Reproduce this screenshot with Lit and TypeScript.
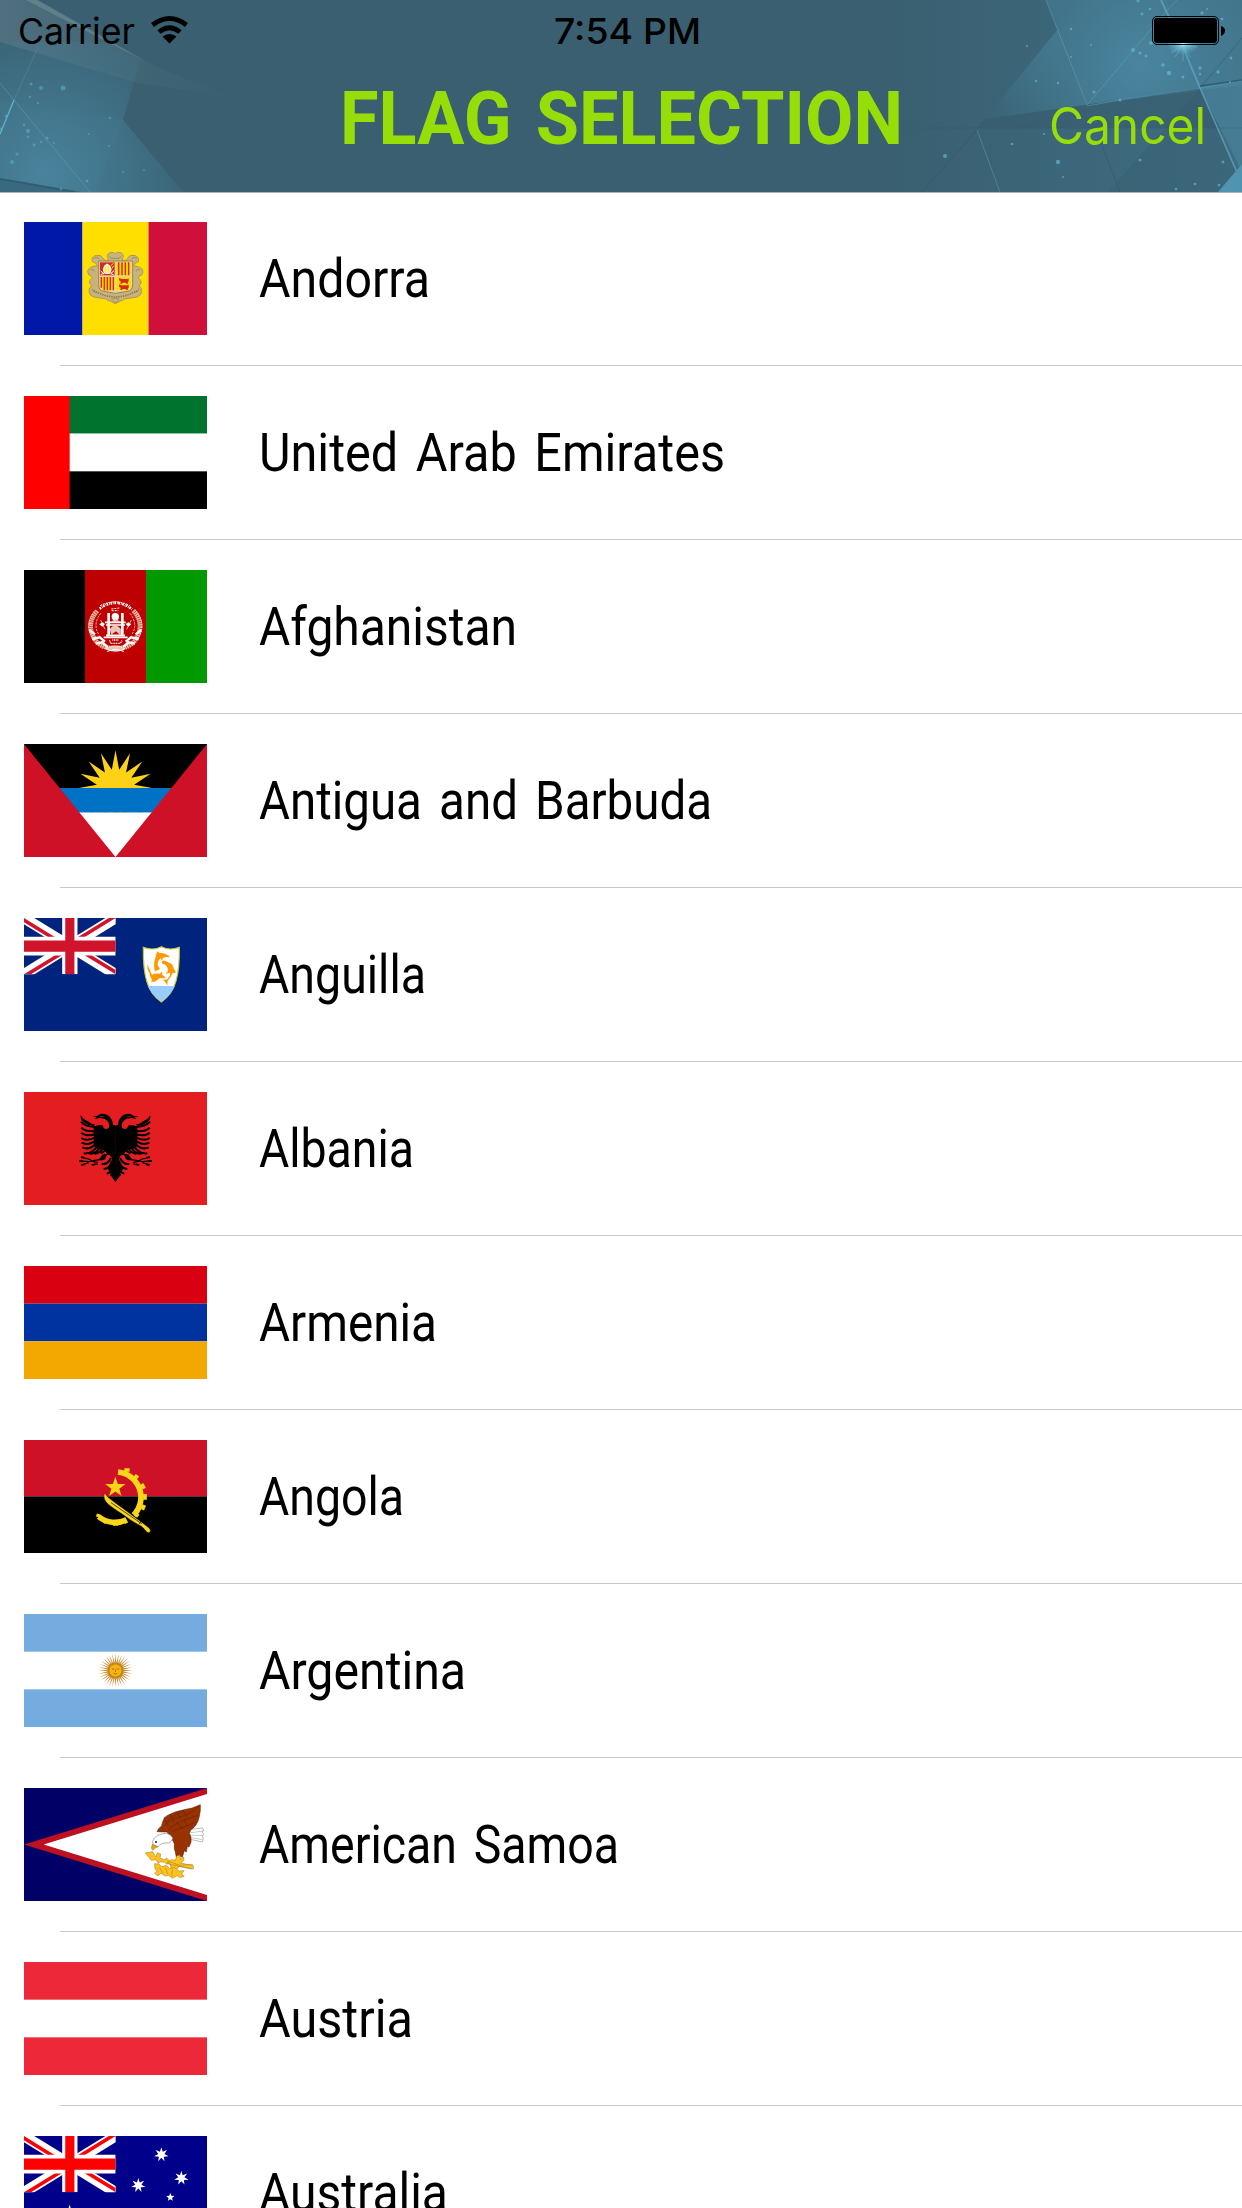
import { LitElement, html, svg, css } from 'lit'
import { customElement, property } from 'lit/decorators.js'

interface Country {
  code: string
  name: string
  width: number
}

const COUNTRIES: Country[] = [
  { code: 'ad', name: 'Andorra', width: 171 },
  { code: 'ae', name: 'United Arab Emirates', width: 466 },
  { code: 'af', name: 'Afghanistan', width: 258 },
  { code: 'ag', name: 'Antigua and Barbuda', width: 453 },
  { code: 'ai', name: 'Anguilla', width: 167 },
  { code: 'al', name: 'Albania', width: 155 },
  { code: 'am', name: 'Armenia', width: 178 },
  { code: 'ao', name: 'Angola', width: 145 },
  { code: 'ar', name: 'Argentina', width: 207 },
  { code: 'as', name: 'American Samoa', width: 360 },
  { code: 'at', name: 'Austria', width: 154 },
  { code: 'au', name: 'Australia', width: 189 },
]

const star = (cx: number, cy: number, outer: number, inner: number, n: number) =>
  Array.from({ length: n * 2 }, (_, i) => {
    const r = i % 2 ? inner : outer
    const a = (Math.PI * i) / n - Math.PI / 2
    return `${(cx + r * Math.cos(a)).toFixed(1)},${(cy + r * Math.sin(a)).toFixed(1)}`
  }).join(' ')

const rect = (x: number, y: number, w: number, h: number, fill: string) =>
  svg`<rect x=${x} y=${y} width=${w} height=${h} fill=${fill} />`

const unionJack = (blue: string, red: string) => svg`
  <svg width="275" height="169" viewBox="0 0 60 30" preserveAspectRatio="none">
    <clipPath id="quarters"><path d="M30 15h30v15zv15H0zH0V0zV0h30z" /></clipPath>
    <rect width="60" height="30" fill=${blue} />
    <path d="M0 0l60 30M60 0L0 30" stroke="#fff" stroke-width="6" />
    <path d="M0 0l60 30M60 0L0 30" stroke=${red} stroke-width="4" clip-path="url(#quarters)" />
    <path d="M30 0v30M0 15h60" stroke="#fff" stroke-width="10" />
    <path d="M30 0v30M0 15h60" stroke=${red} stroke-width="6" />
  </svg>`

const andorra = () => svg`
  ${rect(0, 0, 175.5, 339, '#0018a8')}
  ${rect(175.5, 0, 198, 339, '#fedf00')}
  ${rect(373.5, 0, 176, 339, '#d0103a')}
  <g transform="translate(-72 -66)">
    <path fill="#c7b37f" stroke="#a68f59" stroke-width="2.5" d="M346 161q6-5 10-4q14 1 14 12l-4 12q16 2 18-8q4-9 18-7q14 3 14 14q0 7-7 8q-5 1-6 5l-3 4q8 1 13 3q15 3 16 15q0 11-12 14q-5 5 2 9q6 2 4 11q-2 6-6 8q9 7 8 18q-1 11-14 16l-38 6q-5 7-12 6l-15 8l-15-8q-7 1-12-6l-38-6q-13-5-14-16q-1-11 8-18q-4-2-6-8q-2-9 4-11q7-4 2-9q-12-3-12-14q1-12 16-15q5-2 13-3l-3-4q-1-4-6-5q-7-1-7-8q0-11 14-14q14-2 18 7q2 10 18 8l-4-12q0-11 14-12q4-1 10 4z" />
    <g fill="none" stroke="#8f7a49" stroke-width="2">
      <path d="M281 176q7-8 16 0M395 176q9-7 16 0M272 210q8-6 11 4M421 210q-10-6-12 4M329 169l5 6h24l5-6M277 266q0 9 11 12M417 266q0 9-12 12" />
      <path d="M281 272q32 18 65 19q34-1 65-19" stroke-width="5" stroke-dasharray="4 3" />
      <path d="M334 298q12-8 24 0M338 302l8 6l9-6" />
    </g>
    <path fill="#e3d59d" stroke="#9d864c" stroke-width="3" d="M296 183h102v72q-1 18-17 19l-35 6l-34-6q-15-1-16-19z" />
    ${rect(300, 187, 44, 39, '#d52b1e')}
    ${rect(349, 187, 44, 39, '#fedf00')}
    <path fill="#fedf00" d="M300 231h44v40h-33q-10-2-11-15z" />
    <path fill="#fedf00" d="M349 231h44v25q-1 13-11 15h-33z" />
    <path d="M356 187v39M366 187v39M376 187v39M386 187v39M304 231v32M313 231v40M322 231v40M331 231v40M340 231v40" stroke="#d52b1e" stroke-width="4.5" />
    <path d="M314 220q-8-10 0-23l7-5l8 5q9 12 0 23z" fill="#fff3a0" stroke="#fff" stroke-width="3" />
    <path d="M317 219v-17M325 219v-17" stroke="#fedf00" stroke-width="3" />
    <path d="M302 213l10 8l-10 2M342 212l-10 9l9 3" fill="none" stroke="#fff" stroke-width="3" />
    <path d="M332 197l9-7M336 205l5-8" stroke="#fedf00" stroke-width="3" />
    <path fill="#d52b1e" d="M357 234l8 3h17l4-2v9l-3 3l1 4h-5l-2-3h-9l-2 3h-5l1-7l-5-3zM357 253l8 3h17l4-2v9l-3 3l1 4h-5l-2-3h-9l-2 3h-5l1-7l-5-3z" />
  </g>`

const emirates = () => svg`
  ${rect(0, 0, 549, 113, '#00732f')}
  ${rect(0, 113, 549, 113, '#fff')}
  ${rect(0, 226, 549, 113, '#000')}
  ${rect(0, 0, 137, 339, '#f00')}`

const afghanistan = () => svg`
  ${rect(0, 0, 183, 339, '#000')}
  ${rect(183, 0, 183, 339, '#bf0000')}
  ${rect(366, 0, 183, 339, '#009a00')}
  <g transform="translate(-42 -30)" fill="none" stroke="#fff">
    <path d="M262 153q-36 38-7 86q20 28 59 25M370 152q36 39 7 87q-20 28-59 25" stroke="#e6b9a0" stroke-width="14" stroke-dasharray="5 1.5" />
    <path d="M254 152q-33 40-5 86M378 152q33 40 5 86M272 160q-26 34-4 66M360 160q26 34 4 66" stroke-width="2" stroke-dasharray="7 3" />
    <path d="M238 210l17 13M246 237l23-5l16 13M257 251l19-4l17 14M394 210l-17 13M386 237l-23-5l-16 13M375 251l-19-4l-17 14" stroke-width="7" />
    <path d="M269 146q48-36 97 2" stroke-width="8" stroke-dasharray="5 3 2 2" />
    <path d="M270 137q46-23 90 0M304 147l24-3M305 152h20" stroke-width="3" stroke-dasharray="6 3" />
    <circle cx="316" cy="170" r="11" fill="#fff" stroke="none" />
    <path d="M296 159v65M337 159v65" stroke-width="8" />
    <path d="M285 187h62M288 195h57M281 232h72M288 226h57" stroke-width="5" />
    <path d="M305 185l11-9l13 9zM300 207q15-20 32 0v19l-14-13l-14 10z" fill="#e8c7b4" />
    <path d="M272 180l13 28M364 180l-14 28" stroke-width="2" />
    <path d="M268 193l9-6l8 5l-8 8zM347 192l8-5l9 6l-9 7z" fill="#fff" stroke="none" />
    <path d="M298 241l5 9h28l6-10M307 240h20" stroke-width="4" stroke-dasharray="3 2" />
    <path d="M287 266q30-16 58 0q-27 15-58 0z" fill="#e8c7b4" stroke-width="3" stroke-dasharray="7 2" />
    <path d="M291 274l25-6l26 6" stroke-width="3" />
  </g>`

const antigua = () => svg`
  ${rect(0, 0, 549, 133, '#000')}
  <polygon points=${star(274.5, 133, 114, 57, 16)} fill="#fcd116" />
  ${rect(0, 132, 549, 74, '#0072c6')}
  ${rect(0, 206, 549, 133, '#fff')}
  <path d="M0 0v339h549V0L274.500 339z" fill="#ce1126" />`

const anguilla = () => svg`
  ${rect(0, 0, 549, 339, '#00247d')}
  ${unionJack('#00247d', '#cf142b')}
  <g transform="translate(-42 -24)">
    <path d="M400 112q30 11 54-2q25 13 54 2q1 65-10 101q-10 38-44 63q-34-25-44-63q-11-36-10-101z" fill="#fff" stroke="#c2c83e" stroke-width="3.500" />
    <path d="M414 228h80q-11 28-40 46q-29-18-40-46z" fill="#9cf" />
    <g fill="#ff9900">
      <path d="M434 184q-4-25 2-40l3-13l4-7l5 5q18-2 33 13q-15-2-22 2l-4 8l-2-7q-10 5-10 20l7 13z" />
      <path d="M457 152q9-1 17 5q14 2 17 18l7 13l-10 1q-5 14-15 23l-1 14l-8-12l-6-4l14-2q9-8 9-20l-14 3l7-8q0-12-8-19l-11-4z" />
      <path d="M412 163l6 13q5 13 8 18q8-5 22-3l8-6l1 10q8 4 10 10l-17-1l-15 11h-12l3-6q-8-10-7-19l-6-11z" />
    </g>
  </g>`

const eagleHalf = () => svg`
  <path d="M317 122l-8-3q-2-18-13-27q-10-7-25-5l-8 5l-16 3l14 2l-8 5l17-3q15 1 22 8q9 11 4 22q-9 6-15-1l-4-7q-14-3-26 5v58q12 10 33 11l8 14q14 2 14 15l-14 25l25 38z" />
  <path d="M308 210h9v82l-15-21l8-12z" />
  <path d="M250 124l5-6q-14-2-18-8q-14-3-25-19q-2 13 9 21q12 9 29 12z" />
  <g fill="none" stroke="#000" stroke-width="6">
    <path d="M258 126q-32 0-45-16M258 138q-31 4-44-10M258 147q-30 9-44-4M258 156q-27 15-44 3M260 164q-25 20-45 9M263 170q-22 28-46 17M266 177q-18 32-45 28M272 181q-10 25-33 26M280 184q-5 19-26 23M288 188q-3 13-17 16" />
    <path d="M303 219q-11 22-28 17M306 229q-6 23-25 23M310 239q-4 24-20 27M314 247l-12 25" />
  </g>
  <path d="M292 207l-14 1q-6 12-16 18h17l6-3z" />
  <path d="M268 224l-34 6M263 232q-17-2-27-10l-23-5M264 237l-19 2M234 230l-27-3M236 233l-23 7" fill="none" stroke="#000" stroke-width="3.500" />
  <path d="M212 213l12 3l-3 5zM214 243l10-10l2 7zM206 230l12-5l-1 7zM244 243l10-8l2 6z" />
  <path d="M270 95h11" stroke="#e41e20" stroke-width="2" />`

const albania = () => svg`
  ${rect(0, 0, 549, 339, '#e41e20')}
  <g transform="translate(-42 -21)">${eagleHalf()}</g>
  <g transform="translate(591 -21) scale(-1 1)">${eagleHalf()}</g>`

const armenia = () => svg`
  ${rect(0, 0, 549, 113, '#d90012')}
  ${rect(0, 113, 549, 113, '#0033a0')}
  ${rect(0, 226, 549, 113, '#f2a800')}`

const angola = () => svg`
  ${rect(0, 0, 549, 169, '#ce1126')}
  ${rect(0, 169, 549, 170, '#000')}
  <g transform="translate(-42 -540)" fill="none" stroke="#f9d616">
    <path d="M324 636A76 76 0 0 1 371 765M350 779A78 78 0 0 1 266 770" stroke-width="17" />
    <path d="M343 630h16M374 646l10 8M395 672l8 14M405 702v17M403 735l-6 14M384 761l-7 9M266 762l-3 9M281 783l8 4M309 792h16M343 787l8-4" stroke-width="11" />
    <polygon points=${star(316, 682, 32, 12.5, 5)} fill="#f9d616" stroke="none" />
    <path d="M284 699l9 12q25 20 44 33l57 42q13 10 22 17q8 7 4 14q-7 4-14-6q-10-14-21-17q-25-14-45-30q-32-20-46-32q-17-16-10-33z" fill="#f9d616" stroke="#000" stroke-width="1" />
    <path d="M303 728l92 63M386 794l9-12" stroke="#000" stroke-width="2" />
  </g>`

const argentina = () => svg`
  ${rect(0, 0, 549, 339, '#74acdf')}
  ${rect(0, 113, 549, 113, '#fff')}
  <polygon points=${star(274.5, 169.5, 52, 22, 32)} fill="#cd8f3c" />
  <circle cx="274.5" cy="169.500" r="24" fill="#c4851f" />
  <circle cx="274.5" cy="169.500" r="18" fill="#f6b40e" />
  <path d="M264 165h7M278 165h7M274.500 167v7M269 178q5 4 11 0" stroke="#a8650c" stroke-width="2.500" fill="none" />`

const samoa = () => svg`
  ${rect(0, 0, 549, 339, '#006')}
  <path d="M0 169.500L549 0v339z" fill="#bd1021" />
  <path d="M59 169.500L549 18v303z" fill="#fff" />
  <g transform="translate(-42 -24)" stroke-width="1.500">
    <path d="M532 149l46-5l3 8l-5 3l5 8l-5 5l4 8l-3 10l-45-10z" fill="#fff" stroke="#777" />
    <path d="M538 159l41-6M537 166h42M538 172l41 7" stroke="#999" />
    <path d="M441 155q4-10 14-18q4-24 16-30q24-14 51-18l24-5q11-5 25-10q2 17-4 40q-6 24-24 35l-5 11q7 10 5 27l-6 14l-5-2l-3 17l-6-4l-6 20l-8-4l-10 4l-3-15q-5-12-3-26l-13-25l-10-10q-15 0-25-1z" fill="#983200" stroke="#4a1a05" />
    <path d="M463 137q21-22 53-28q30-9 51-30M466 127q22-20 56-35M475 150q20-25 91-44M487 154q36-14 70-27M462 110l12 27M480 102l12 25M500 96l12 22M520 91l11 20M500 125l17 22M521 117l13 24" fill="none" stroke="#5e1f05" />
    <path d="M455 162l14-2l12 5l8 9q-4 11-13 15q-15-2-25 4l-8 8l-14-7q-5-9 4-20q10-10 22-12z" fill="#fff" stroke="#666" />
    <circle cx="438" cy="186" r="3" fill="#222" />
    <path d="M427 193l17 7l-9 4l-6 7l-5-6z" fill="#e5a70f" stroke="#a37512" />
    <g fill="#ffc221" stroke="#977312">
      <path d="M406 219l22-4l10 16l4-13l10 4l-2 12l16 6l3-7l13 13l-11 7l-7-6l-13-2l-6 5l-7-11l-14 2z" />
      <path d="M484 239l12 2l4-13l9-3l3 13l9-7l1 9l-10 9l38 8v10l-41-8l-12 12l-14-7l-3-13l-9-2z" />
      <path d="M434 251l13 1l7 8l15-4l10 10l14-4l14 11l15-1l-7 9l7 9l-13 2l-8-5l-14 8l-11-9l-12 2l-11-9l-9 9l-10-8l8-8l-7-4z" />
      <path d="M472 243l37 13l40-3M475 252l70 15M449 263l9 17M466 263l8 20M487 269l-2 20" fill="none" />
    </g>
  </g>`

const austria = () => svg`
  ${rect(0, 0, 549, 339, '#ed2939')}
  ${rect(0, 113, 549, 113, '#fff')}`

const australia = () => svg`
  ${rect(0, 0, 549, 339, '#00008b')}
  ${unionJack('#00008b', '#f00')}
  <g fill="#fff">
    <polygon points=${star(137, 254, 48, 21, 7)} />
    <polygon points=${star(412, 56, 22, 9.5, 7)} />
    <polygon points=${star(472, 126, 22, 9.5, 7)} />
    <polygon points=${star(343, 148, 22, 9.5, 7)} />
    <polygon points=${star(439, 184, 13, 5.5, 5)} />
    <polygon points=${star(412, 282, 22, 9.5, 7)} />
  </g>`

const FLAGS: Record<string, () => unknown> = {
  ad: andorra,
  ae: emirates,
  af: afghanistan,
  ag: antigua,
  ai: anguilla,
  al: albania,
  am: armenia,
  ao: angola,
  ar: argentina,
  as: samoa,
  at: austria,
  au: australia,
}

@customElement('country-flag')
export class CountryFlag extends LitElement {
  @property() code = ''

  static styles = css`
    :host { display: block; width: 183px; height: 113px; }
    svg { display: block; }
    .flag { width: 100%; height: 100%; overflow: hidden; }
  `

  render() {
    return html`
      <svg class="flag" viewBox="0 0 549 339" preserveAspectRatio="none">
        ${FLAGS[this.code]?.()}
      </svg>
    `
  }
}

// single line of text stretched to a fixed width, baseline at the bottom of its box
@customElement('fit-text')
export class FitText extends LitElement {
  @property() text = ''
  @property({ type: Number }) width = 100
  @property({ type: Number }) height = 38

  static styles = css`
    :host { display: block; }
    svg { display: block; overflow: visible; fill: currentColor; }
  `

  render() {
    return html`
      <svg width=${this.width} height=${this.height}>
        <text x="0" y=${this.height} textLength=${this.width} lengthAdjust="spacingAndGlyphs">${this.text}</text>
      </svg>
    `
  }
}

const SPARKS_LEFT = [
  [41, 88, 2], [31, 84, 1.5], [63, 88, 2.5], [38, 103, 1.2], [30, 97, 1.2], [24, 125, 1.3], [28, 131, 2.2],
  [28, 137, 1.4], [47, 138, 1.6], [41, 142, 1.2], [34, 145, 1.4], [17, 154, 1.6], [12, 162, 2], [87, 181, 1.6],
  [61, 189, 1.4], [110, 118, 1.2], [89, 134, 1.1], [123, 172, 1], [144, 170, 1], [6, 116, 1.5], [1, 129, 1.6],
  [54, 143, 1], [109, 146, 1],
]

const SPARKS_RIGHT = [
  [1071, 29, 1.3], [1091, 45, 1], [1071, 57, 1], [1027, 46, 1], [1094, 92, 1.6], [1058, 83, 1.2], [1036, 81, 1.2],
  [1120, 100, 1.5], [1133, 50, 2], [1140, 53, 1.6], [1146, 56, 1.4], [1151, 43, 2], [1163, 65, 1.8],
  [1169, 73, 2.2], [1183, 77, 1.5], [1200, 68, 1.7], [1200, 74, 1.2], [1218, 72, 1.7], [1231, 58, 1.4],
  [1222, 19, 1.5], [1202, 13, 1.7], [1142, 14, 1.4], [1150, 9, 1.2], [1138, 1, 1.5], [1207, 9, 1], [1230, 82, 1],
  [945, 156, 2], [1012, 144, 1.3], [1058, 162, 2.2], [1063, 177, 1], [1140, 160, 1.5], [1044, 134, 1],
  [1195, 184, 1.3], [1219, 185, 1.3], [1176, 189, 1.3], [1223, 162, 1.4],
]

@customElement('nav-backdrop')
export class NavBackdrop extends LitElement {
  static styles = css`
    :host { display: block; }
    svg { display: block; }
  `

  render() {
    return html`
      <svg width="1242" height="192" viewBox="0 0 1242 192">
        <defs>
          <radialGradient id="deep" gradientUnits="userSpaceOnUse" cx="45" cy="175" r="150">
            <stop offset="0" stop-color="#4a869f" stop-opacity=".9" />
            <stop offset=".45" stop-color="#47829b" stop-opacity=".6" />
            <stop offset="1" stop-color="#47829b" stop-opacity=".12" />
          </radialGradient>
          <linearGradient id="haze" x1="0" y1="0" x2="1" y2="0">
            <stop offset="0" stop-color="#66808c" stop-opacity=".5" />
            <stop offset="1" stop-color="#4f7580" stop-opacity="0" />
          </linearGradient>
          <linearGradient id="side" x1="0" y1="0" x2="1" y2="0">
            <stop offset="0" stop-color="#467f98" stop-opacity="0" />
            <stop offset="1" stop-color="#467f98" stop-opacity=".6" />
          </linearGradient>
          <linearGradient id="facet" gradientUnits="userSpaceOnUse" x1="990" y1="115" x2="1100" y2="30">
            <stop offset="0" stop-color="#47829b" stop-opacity="0" />
            <stop offset=".6" stop-color="#47829b" stop-opacity=".6" />
            <stop offset="1" stop-color="#47829b" stop-opacity=".7" />
          </linearGradient>
          <radialGradient id="panel" gradientUnits="userSpaceOnUse" cx="1140" cy="65" r="130">
            <stop offset="0" stop-color="#4b8aa5" stop-opacity=".85" />
            <stop offset="1" stop-color="#47829b" stop-opacity=".35" />
          </radialGradient>
          <radialGradient id="flare">
            <stop offset="0" stop-color="#e8fbff" />
            <stop offset=".25" stop-color="#7ed0ea" stop-opacity=".8" />
            <stop offset="1" stop-color="#5fb3d0" stop-opacity="0" />
          </radialGradient>
        </defs>
        <rect width="1242" height="192" fill="#395f70" />

        <path d="M0 0h36l110 62l104 43l-60-14l-53-8L0 42z" fill="url(#haze)" />
        <path d="M0 42h105l35 18l-17 60l60 72H0z" fill="url(#deep)" />
        <path d="M0 100l123 20l-27 72H0z" fill="url(#deep)" opacity=".25" />
        <path d="M26 0h12l90 51l20 12z" fill="#8fa5a5" opacity=".35" />
        <path d="M38 47L14 100L0 135" fill="none" stroke="#5d97ab" opacity=".4" />
        <path d="M14 100L0 134" stroke="#65c5de" stroke-width="1.200" opacity=".8" />
        <path d="M0 83l14 17l76 92" fill="none" stroke="#5d9db5" opacity=".55" />
        <path d="M0 178l82 14H0z" fill="#38697f" />
        <path d="M0 179l75 13" stroke="#2e5769" stroke-width="1.500" opacity=".7" />

        <path d="M880 0h362v192H880z" fill="url(#side)" opacity=".75" />
        <path d="M1058 29l29 76l-102 14z" fill="url(#facet)" />
        <path d="M1046 0l41 105l-29-76z" fill="#47829b" opacity=".4" />
        <path d="M1046 0h196v85L1087 105z" fill="url(#panel)" />
        <path d="M985 119l102-14l113-17l20 40H976z" fill="#355a6c" opacity=".5" />
        <path d="M1200 88l42-6v90z" fill="#4c8ba5" opacity=".5" />
        <path d="M1200 88l-92 104h112l17-22z" fill="#36596b" opacity=".3" />
        <path d="M870 128h372" stroke="#2f5568" opacity=".3" />
        <path d="M1046 0l41 105M1087 105l82-97l8-8M977 130l23 62" fill="none" stroke="#68a5bd" opacity=".45" />
        <path d="M1087 105l113-17l42-50M1100 140l20 52M977 130l-55 62" fill="none" stroke="#2b5266" opacity=".4" />
        <path d="M1161 0l22 47l17 41l36 82l6 13" fill="none" stroke="#62aeca" stroke-width="1.800" opacity=".65" />
        <path d="M1087 106l33-6l80-12l42-7" fill="none" stroke="#5fb0cc" opacity=".45" />
        <path d="M1200 86l42-6" stroke="#2b5266" stroke-width="1.500" opacity=".7" />
        <path d="M1218 192l24-28v28z" fill="#4f94b0" />
        <path d="M1169 44l28 3M1171 53l24-16M1175 57l16-25M1183 61V32M1190 57l-14-25" stroke="#7cc8e0" stroke-width=".8" opacity=".5" />
        <ellipse cx="1183" cy="44" rx="17" ry="11" fill="url(#flare)" />
        ${SPARKS_LEFT.map(([x, y, r]) => svg`<circle cx=${x} cy=${y} r=${r} fill="#5fb5cf" opacity=".5" />`)}
        ${SPARKS_RIGHT.map(([x, y, r]) => svg`<circle cx=${x} cy=${y} r=${r} fill="#69bfda" opacity=".6" />`)}
      </svg>
    `
  }
}

@customElement('app-root')
export class AppRoot extends LitElement {
  static styles = css`
    :host {
      display: block;
      width: 1242px;
      height: 2208px;
      overflow: hidden;
      background: #fff;
      color: #000;
      font-family: Roboto, "Liberation Sans", sans-serif;
    }

    header { position: relative; height: 192px; }
    nav-backdrop { position: absolute; inset: 0; }
    header::after {
      content: '';
      position: absolute;
      left: 0; right: 0; top: 192px;
      height: 1px;
      background: #b2b2b2;
    }

    .status, .nav {
      position: relative;
      display: grid;
      grid-template-columns: 1fr auto 1fr;
    }
    .status {
      height: 60px;
      box-sizing: border-box;
      padding: 16px 17px 0 18px;
      align-items: start;
      font: 400 36px Inter, sans-serif;
    }
    .carrier { display: flex; gap: 16px; }
    .carrier fit-text, .time { padding-top: 2px; }
    .time { font-weight: 500; padding-left: 11px; }
    .battery { justify-self: end; }
    .status svg { display: block; }

    .nav { height: 132px; color: #97de09; }
    .title {
      grid-column: 2;
      padding-top: 31px;
      font-weight: 700;
      font-size: 74.5px;
      word-spacing: 7px;
    }
    .cancel {
      justify-self: end;
      padding: 47px 36px 0 0;
      font: 400 51px Inter, sans-serif;
    }

    ul { list-style: none; margin: 0; padding: 0; }
    li {
      position: relative;
      display: flex;
      align-items: flex-start;
      gap: 52px;
      height: 174px;
      box-sizing: border-box;
      padding: 30px 24px 0;
      font-size: 53px;
    }
    li::after {
      content: '';
      position: absolute;
      left: 60px; right: 0; bottom: 0;
      height: 1px;
      background: #c8c7cc;
    }
    .name { padding-top: 37px; word-spacing: 6px; }
  `

  render() {
    return html`
      <header>
        <nav-backdrop></nav-backdrop>
        <div class="status">
          <div class="carrier">
            <fit-text text="Carrier" width="117" height="26"></fit-text>
            <svg width="38" height="28" viewBox="0 0 38 28">
              <path d="M1.500 9q17-13 34 0M8 16q10.500-8.500 21 0" fill="none" stroke="#000" stroke-width="4.800" />
              <path d="M11.500 20.500q7-5 14 0l-7 7z" />
            </svg>
          </div>
          <fit-text class="time" text="7:54 PM" width="147" height="26"></fit-text>
          <svg class="battery" width="73" height="29" viewBox="0 0 73 29">
            <rect x=".5" y=".5" width="66" height="28" rx="4.500" fill="none" stroke="#000" />
            <rect x="2" y="2" width="63" height="25" rx="3" />
            <path d="M69 10q4 1 4 4.500t-4 5.500z" />
          </svg>
        </div>
        <div class="nav">
          <fit-text class="title" text="FLAG SELECTION" width="563" height="53"></fit-text>
          <fit-text class="cancel" text="Cancel" width="157" height="37"></fit-text>
        </div>
      </header>
      <ul>
        ${COUNTRIES.map(c => html`
          <li>
            <country-flag code=${c.code}></country-flag>
            <fit-text class="name" text=${c.name} width=${c.width} height="38"></fit-text>
          </li>
        `)}
      </ul>
    `
  }
}
